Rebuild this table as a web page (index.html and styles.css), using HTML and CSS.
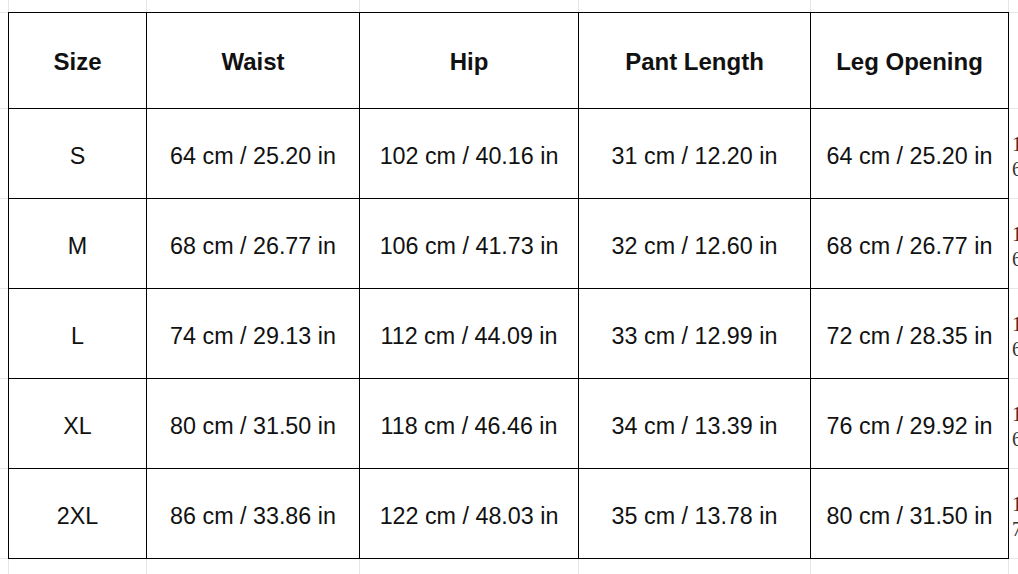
FILE: index.html
```html
<!DOCTYPE html>
<html>
<head>
<meta charset="utf-8">
<link rel="stylesheet" href="styles.css">
</head>
<body>
<div class="sheet">
  <div class="chart">
    <div class="cell head">Size</div>
    <div class="cell head">Waist</div>
    <div class="cell head">Hip</div>
    <div class="cell head">Pant Length</div>
    <div class="cell head">Leg Opening</div>
    <div class="spill"></div>

    <div class="cell">S</div>
    <div class="cell">64 cm / 25.20 in</div>
    <div class="cell">102 cm / 40.16 in</div>
    <div class="cell">31 cm / 12.20 in</div>
    <div class="cell">64 cm / 25.20 in</div>
    <div class="spill"><span class="l1">1</span><span class="l2">6</span></div>

    <div class="cell">M</div>
    <div class="cell">68 cm / 26.77 in</div>
    <div class="cell">106 cm / 41.73 in</div>
    <div class="cell">32 cm / 12.60 in</div>
    <div class="cell">68 cm / 26.77 in</div>
    <div class="spill"><span class="l1">1</span><span class="l2">6</span></div>

    <div class="cell">L</div>
    <div class="cell">74 cm / 29.13 in</div>
    <div class="cell">112 cm / 44.09 in</div>
    <div class="cell">33 cm / 12.99 in</div>
    <div class="cell">72 cm / 28.35 in</div>
    <div class="spill"><span class="l1">1</span><span class="l2">6</span></div>

    <div class="cell">XL</div>
    <div class="cell">80 cm / 31.50 in</div>
    <div class="cell">118 cm / 46.46 in</div>
    <div class="cell">34 cm / 13.39 in</div>
    <div class="cell">76 cm / 29.92 in</div>
    <div class="spill"><span class="l1">1</span><span class="l2">6</span></div>

    <div class="cell">2XL</div>
    <div class="cell">86 cm / 33.86 in</div>
    <div class="cell">122 cm / 48.03 in</div>
    <div class="cell">35 cm / 13.78 in</div>
    <div class="cell">80 cm / 31.50 in</div>
    <div class="spill"><span class="l1">1</span><span class="l2">7</span></div>
  </div>
</div>
</body>
</html>
```

FILE: styles.css
```css
html, body {
  margin: 0;
  padding: 0;
}
body {
  width: 1018px;
  height: 574px;
  overflow: hidden;
  background-color: #fff;
  background-image:
    linear-gradient(#e6e6e6, #e6e6e6),
    linear-gradient(#e6e6e6, #e6e6e6),
    linear-gradient(#e6e6e6, #e6e6e6),
    linear-gradient(#e6e6e6, #e6e6e6),
    linear-gradient(#e6e6e6, #e6e6e6),
    linear-gradient(#e6e6e6, #e6e6e6),
    linear-gradient(#e6e6e6, #e6e6e6),
    linear-gradient(#e6e6e6, #e6e6e6),
    linear-gradient(#e6e6e6, #e6e6e6),
    linear-gradient(#e6e6e6, #e6e6e6),
    linear-gradient(#e6e6e6, #e6e6e6),
    linear-gradient(#e6e6e6, #e6e6e6),
    linear-gradient(#e6e6e6, #e6e6e6);
  background-repeat: no-repeat;
  background-size:
    1px 100%, 1px 100%, 1px 100%, 1px 100%, 1px 100%, 1px 100%,
    100% 1px, 100% 1px, 100% 1px, 100% 1px, 100% 1px, 100% 1px, 100% 1px;
  background-position:
    8px 0, 146px 0, 359px 0, 578px 0, 810px 0, 1008px 0,
    0 12px, 0 108px, 0 198px, 0 288px, 0 378px, 0 468px, 0 558px;
  font-family: "Liberation Sans", Arial, sans-serif;
  color: #000;
}
.sheet {
  padding: 12px 0 0 8px;
}
.chart {
  display: grid;
  grid-template-columns: 139px 213px 219px 232px 198px 1fr;
  grid-template-rows: 97px repeat(5, 90px);
}
.cell {
  box-sizing: border-box;
  border-right: 1px solid #000;
  border-bottom: 1px solid #000;
  display: flex;
  align-items: center;
  justify-content: center;
  font-size: 23.3px;
  white-space: nowrap;
  padding-top: 5px;
  color: #111;
}
.cell:nth-child(6n+1) {
  border-left: 1px solid #000;
}
.chart > :nth-child(-n+6).cell {
  border-top: 1px solid #000;
}
.head {
  font-weight: bold;
  font-size: 24px;
  padding-top: 3px;
}
.spill {
  display: flex;
  flex-direction: column;
  justify-content: center;
  padding-left: 3px;
  overflow: hidden;
  font-family: "Liberation Serif", "Times New Roman", serif;
  font-size: 20px;
  line-height: 25px;
  white-space: nowrap;
  padding-top: 6px;
}
.l1 {
  color: #5b2418;
}
.l2 {
  color: #333;
}
```
